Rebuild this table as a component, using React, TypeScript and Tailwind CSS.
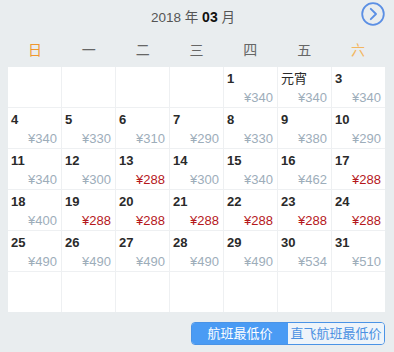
import React from "react";

type Day = { label: string; price: number; bold?: boolean } | null;

const prices: (Day)[] = [
  null, null, null, null,
  { label: "1", price: 340, bold: true },
  { label: "元宵", price: 340 },
  { label: "3", price: 340, bold: true },
];

const rest = [340, 330, 310, 290, 330, 380, 290, 340, 300, 288, 300, 340, 462, 288, 400, 288, 288, 288, 288, 288, 288, 490, 490, 490, 490, 490, 534, 510];
rest.forEach((p, i) => prices.push({ label: String(i + 4), price: p, bold: true }));
while (prices.length < 42) prices.push(null);

const weekdays = ["日", "一", "二", "三", "四", "五", "六"];

export default function App() {
  return (
    <div
      className="w-[394px] h-[352px] bg-[#e9edef] px-2 overflow-hidden"
      style={{ fontFamily: '"Liberation Sans", Arial, "Noto Sans CJK SC", sans-serif' }}
    >
      <div className="relative h-[36px] flex items-center justify-center pr-[8px] text-[13.5px] text-[#555]">
        <span>2018 年 <b className="text-[#111] text-[14px]">03</b> 月</span>
        <svg className="absolute right-[1px] top-[2px]" width="24" height="24" viewBox="0 0 24 24">
          <circle cx="12" cy="12" r="10.8" fill="none" stroke="#5b8fe4" strokeWidth="1.8" />
          <path d="M9.8 6.8 L15 12 L9.8 17.2" fill="none" stroke="#5b8fe4" strokeWidth="1.9" strokeLinecap="round" strokeLinejoin="round" />
        </svg>
      </div>

      <div className="grid grid-cols-7 w-[377px] h-[28px] items-center text-[14px] text-[#666]">
        {weekdays.map((w, i) => (
          <div
            key={w}
            className={`text-center ${i === 0 ? "text-[#f0962e]" : i === 6 ? "text-[#f3b660]" : ""}`}
          >
            {w}
          </div>
        ))}
      </div>

      <div className="grid grid-cols-7 gap-px w-[377px] mt-[3px] bg-[#eef0f2]">
        {prices.map((d, i) => (
          <div key={i} className="h-[40px] bg-white flex flex-col justify-between pl-[3px] pr-[4px] pt-[4px] pb-[2px]">
            {d && (
              <>
                <span className={`leading-[15px] text-[#2a2a2a] ${d.bold ? "font-bold text-[13px]" : "text-[13px]"}`}>{d.label}</span>
                <span className={`leading-[15px] text-right text-[13px] ${d.price === 288 ? "text-[#b5171c]" : "text-[#9dadba]"}`}>
                  ¥{d.price}
                </span>
              </>
            )}
          </div>
        ))}
      </div>

      <div className="flex justify-end mt-[10px] pr-[1px]">
        <div className="flex w-[194px] h-[23px] rounded-[4px] border border-[#4a93e6] overflow-hidden text-[13px]">
          <button className="flex-1 bg-[#4a9bf4] text-white leading-none">航班最低价</button>
          <button className="flex-1 bg-[#eef4fa] text-[#4a90e2] leading-none">直飞航班最低价</button>
        </div>
      </div>
    </div>
  );
}
